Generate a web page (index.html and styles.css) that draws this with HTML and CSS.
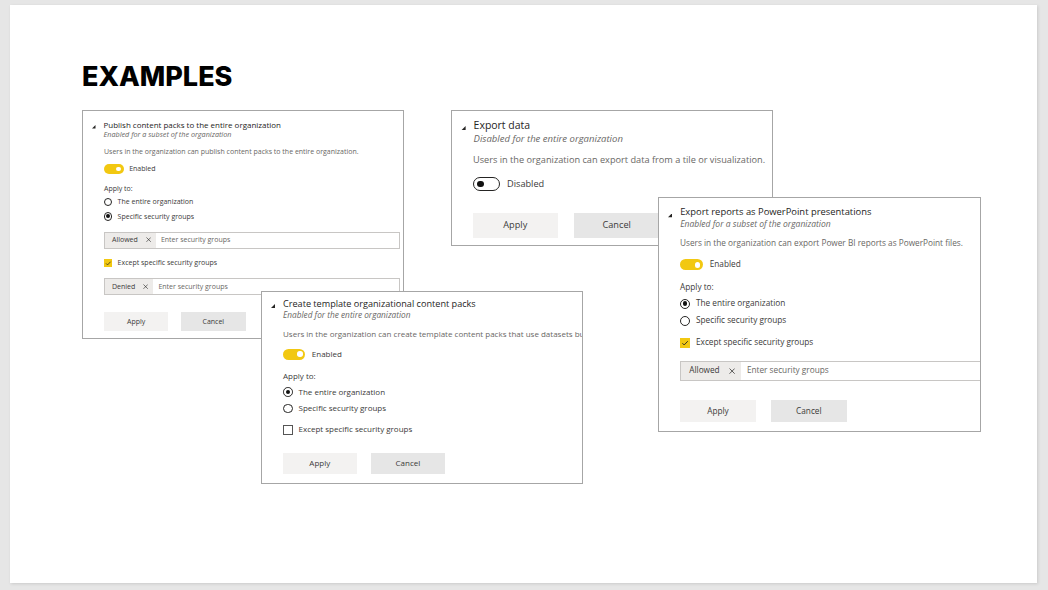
FILE: index.html
```html
<!DOCTYPE html>
<html lang="en">
<head>
  <meta charset="UTF-8" />
  <meta name="viewport" content="width=device-width, initial-scale=1.0" />
  <title>Examples</title>
  <link rel="stylesheet" href="styles.css">
</head>
<body>

  <div class="stage">
    <div class="slide">
      <h1 class="slide-title">EXAMPLES</h1>

      <!-- Publish content packs -->
      <div class="panel panel-publish">
        <div class="head">
          <svg class="caret" viewBox="0 0 4 4"><polygon points="4,0 4,4 0,4" /></svg>
          <div>
            <div class="title">Publish content packs to the entire organization</div>
            <div class="sub">Enabled for a subset of the organization</div>
          </div>
        </div>
        <div class="desc">Users in the organization can publish content packs to the entire organization.</div>
        <div class="toggle-row"><span class="switch"><span class="knob"></span></span>Enabled</div>
        <div class="label">Apply to:</div>
        <div class="opt"><span class="radio"></span>The entire organization</div>
        <div class="opt"><span class="radio on"><span class="dot"></span></span>Specific security groups</div>
        <div class="tags">
          <span class="tag">Allowed <svg class="x" viewBox="0 0 6 6"><path d="M0.5 0.5L5.5 5.5M5.5 0.5L0.5 5.5" /></svg></span>
          <span class="placeholder">Enter security groups</span>
        </div>
        <div class="opt check-opt"><span class="check on"><svg viewBox="0 0 10 10"><polyline points="2.4,5.2 4.2,7 7.8,3.2" /></svg></span>Except specific security groups</div>
        <div class="tags">
          <span class="tag">Denied <svg class="x" viewBox="0 0 6 6"><path d="M0.5 0.5L5.5 5.5M5.5 0.5L0.5 5.5" /></svg></span>
          <span class="placeholder">Enter security groups</span>
        </div>
        <div class="buttons">
          <span class="btn">Apply</span>
          <span class="btn cancel">Cancel</span>
        </div>
      </div>

      <!-- Export data -->
      <div class="panel panel-export">
        <div class="head">
          <svg class="caret" viewBox="0 0 4 4"><polygon points="4,0 4,4 0,4" /></svg>
          <div>
            <div class="title">Export data</div>
            <div class="sub">Disabled for the entire organization</div>
          </div>
        </div>
        <div class="desc">Users in the organization can export data from a tile or visualization.</div>
        <div class="toggle-row"><span class="switch off"><span class="knob"></span></span>Disabled</div>
        <div class="buttons">
          <span class="btn">Apply</span>
          <span class="btn cancel">Cancel</span>
        </div>
      </div>

      <!-- Create template content packs -->
      <div class="panel panel-template">
        <div class="head">
          <svg class="caret" viewBox="0 0 4 4"><polygon points="4,0 4,4 0,4" /></svg>
          <div>
            <div class="title">Create template organizational content packs</div>
            <div class="sub">Enabled for the entire organization</div>
          </div>
        </div>
        <div class="desc">Users in the organization can create template content packs that use datasets built on one on-premises data source.</div>
        <div class="toggle-row"><span class="switch"><span class="knob"></span></span>Enabled</div>
        <div class="label">Apply to:</div>
        <div class="opt"><span class="radio on"><span class="dot"></span></span>The entire organization</div>
        <div class="opt"><span class="radio"></span>Specific security groups</div>
        <div class="opt check-opt"><span class="check"></span>Except specific security groups</div>
        <div class="buttons">
          <span class="btn">Apply</span>
          <span class="btn cancel">Cancel</span>
        </div>
      </div>

      <!-- Export reports as PowerPoint -->
      <div class="panel panel-pptx">
        <div class="head">
          <svg class="caret" viewBox="0 0 4 4"><polygon points="4,0 4,4 0,4" /></svg>
          <div>
            <div class="title">Export reports as PowerPoint presentations</div>
            <div class="sub">Enabled for a subset of the organization</div>
          </div>
        </div>
        <div class="desc">Users in the organization can export Power BI reports as PowerPoint files.</div>
        <div class="toggle-row"><span class="switch"><span class="knob"></span></span>Enabled</div>
        <div class="label">Apply to:</div>
        <div class="opt"><span class="radio on"><span class="dot"></span></span>The entire organization</div>
        <div class="opt"><span class="radio"></span>Specific security groups</div>
        <div class="opt check-opt"><span class="check on"><svg viewBox="0 0 10 10"><polyline points="2.4,5.2 4.2,7 7.8,3.2" /></svg></span>Except specific security groups</div>
        <div class="tags">
          <span class="tag">Allowed <svg class="x" viewBox="0 0 6 6"><path d="M0.5 0.5L5.5 5.5M5.5 0.5L0.5 5.5" /></svg></span>
          <span class="placeholder">Enter security groups</span>
        </div>
        <div class="buttons">
          <span class="btn">Apply</span>
          <span class="btn cancel">Cancel</span>
        </div>
      </div>

    </div>
  </div>

</body>
</html>
```
FILE: styles.css
```css
* { margin: 0; padding: 0; box-sizing: border-box; }
:root {
  --yellow: #f2c811;
  --text: #3b3a39;
  --muted: #696765;
}
body {
  background: #e6e6e6;
  font-family: "Open Sans", sans-serif;
}
.stage {
  padding: 5px 11px 7px 10px;
}
.slide {
  position: relative;
  width: 1027px;
  height: 578px;
  background: #fff;
  box-shadow: 1px 1px 3px rgba(0,0,0,0.12);
}
.slide-title {
  padding: 58px 0 0 72px;
  font-family: Inter, sans-serif;
  font-weight: 800;
  font-size: 27px;
  line-height: 1;
  color: #000;
}

/* settings panels (pasted screenshots) */
.panel {
  position: absolute;
  width: 322px;
  background: #fff;
  border: 1px solid #a6a6a6;
  padding: 1.03em 0 1.09em 21px;
  overflow: hidden;
  white-space: nowrap;
  color: var(--text);
  font-size: 8.25px;
  line-height: 1.33;
}
.panel-publish { left: 72px; top: 105px; font-size: 7px; padding-top: 1.21em; }
.panel-export { left: 441px; top: 105px; font-size: 9.2px; padding-top: 0.75em; padding-bottom: 0.8em; }
.panel-template { left: 251px; top: 286px; font-size: 8px; padding-top: 0.71em; z-index: 2; }
.panel-pptx { left: 648px; top: 192px; width: 323px; z-index: 2; }

.head {
  display: flex;
  align-items: flex-start;
  margin-left: -12px;
}
.caret {
  width: 0.5em;
  height: 0.5em;
  margin: 0.85em 8px 0 0;
  flex: none;
  fill: #252423;
}
.title {
  font-size: 1.14em;
  line-height: 1.38;
  color: #252423;
}
.sub {
  font-size: 1.035em;
  line-height: 1.28;
  font-style: italic;
  color: var(--muted);
}
.panel-export .sub { margin-top: 1px; }
.desc {
  margin-top: 0.97em;
  color: var(--muted);
}
.toggle-row {
  display: flex;
  align-items: center;
  gap: 0.8em;
  height: 1.45em;
  margin-top: 1.15em;
}
.switch {
  display: flex;
  align-items: center;
  justify-content: flex-end;
  width: 2.8em;
  height: 1.33em;
  padding: 0 0.36em;
  border-radius: 1em;
  background: var(--yellow);
}
.knob {
  width: 0.68em;
  height: 0.68em;
  border-radius: 50%;
  background: #fff;
}
.switch.off {
  justify-content: flex-start;
  width: 2.9em;
  height: 1.45em;
  background: #fff;
  border: 1px solid #252423;
}
.switch.off .knob { background: #111; }
.label {
  margin-top: 1.39em;
}
.opt {
  display: flex;
  align-items: center;
  gap: 0.73em;
  height: 1.7em;
  margin-top: 0.36em;
}
.label + .opt { margin-top: 0.42em; }
.radio {
  display: flex;
  align-items: center;
  justify-content: center;
  width: 1.21em;
  height: 1.21em;
  border: 1px solid #252423;
  border-radius: 50%;
}
.dot {
  width: 0.56em;
  height: 0.56em;
  border-radius: 50%;
  background: #111;
}
.check-opt { margin-top: 0.97em; }
.tags + .check-opt { margin-top: 1.23em; }
.check {
  width: 1.21em;
  height: 1.21em;
  border: 1px solid #555;
  background: #fff;
}
.check.on {
  border: none;
  background: var(--yellow);
}
.check svg {
  display: block;
  width: 100%;
  height: 100%;
  fill: none;
  stroke: #252423;
  stroke-width: 0.9;
}
.tags {
  display: flex;
  align-items: stretch;
  width: 42.3em;
  height: 2.42em;
  margin-top: 1.34em;
  border: 1px solid #c8c6c4;
}
.tag {
  display: flex;
  align-items: center;
  gap: 1.1em;
  padding: 0 0.7em 0 1em;
  background: #edebe9;
}
.x {
  width: 0.75em;
  height: 0.75em;
  stroke: #252423;
  stroke-width: 0.7;
}
.placeholder {
  display: flex;
  align-items: center;
  margin-left: 0.75em;
  color: var(--muted);
}
.buttons {
  display: flex;
  gap: 1.82em;
  margin-top: 2.35em;
}
.panel-export .buttons { margin-top: 2.44em; }
.panel-template .buttons { margin-top: 2.05em; }
.btn {
  display: flex;
  align-items: center;
  justify-content: center;
  width: 9.2em;
  height: 2.67em;
  background: #f3f2f1;
  color: var(--text);
}
.btn.cancel {
  background: #e6e6e6;
}
```
